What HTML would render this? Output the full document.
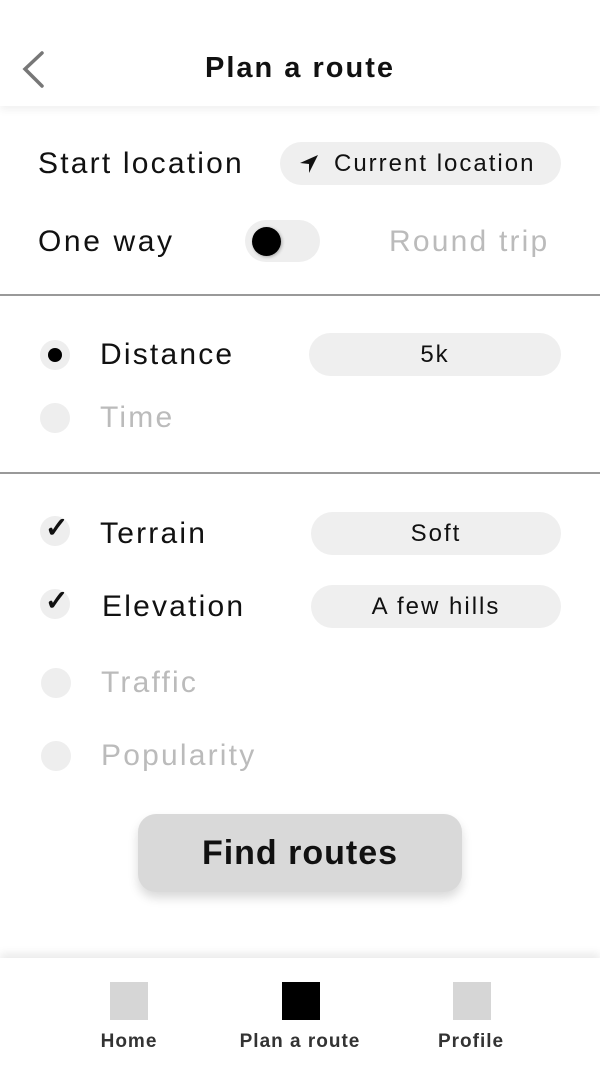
<!DOCTYPE html><html><head><style>
body{margin:0;width:600px;height:1067px;position:relative;background:#fff;font-family:"Liberation Sans",sans-serif;overflow:hidden;color:#111}
.a{position:absolute}
.t{position:absolute;font-size:30px;line-height:34px;white-space:nowrap;letter-spacing:2.2px}
.g{color:#bbb}
.pill{position:absolute;background:#efefef;border-radius:22px;font-size:24px;letter-spacing:2px;display:flex;align-items:center;justify-content:center;white-space:nowrap}
.c{position:absolute;width:30px;height:30px;border-radius:50%;background:#eee}
.hr{position:absolute;left:0;width:600px;height:2px;background:#999}
.nl{position:absolute;font-size:19px;font-weight:bold;color:#333;text-align:center;width:200px;top:1031px;letter-spacing:1px}
.sq{position:absolute;width:38px;height:38px;top:982px;background:#d6d6d6}
.ck{position:absolute;font-size:28px;font-weight:bold;line-height:30px}
</style></head><body>
<div class="a" style="left:0;top:0;width:600px;height:106px;background:#fff;box-shadow:0 4px 8px rgba(0,0,0,0.06)"></div>
<svg class="a" style="left:18px;top:50px" width="32" height="40"><path d="M24 3 L7 19 L24 36" fill="none" stroke="#777" stroke-width="3.5" stroke-linecap="round"/></svg>
<div class="t" style="left:0;width:600px;text-align:center;top:51px;font-weight:bold;font-size:29px;letter-spacing:2px">Plan a route</div>
<div class="t" style="left:38px;top:147px">Start location</div>
<div class="pill" style="left:280px;top:142px;width:281px;height:43px;justify-content:flex-start">
<svg style="margin-left:18px;margin-right:14px" width="22" height="22" viewBox="0 0 22 22"><path d="M20 2 L2 10 L11 11 L11 20 Z" fill="#111"/></svg>Current location</div>
<div class="t" style="left:38px;top:225px;letter-spacing:2.6px">One way</div>
<div class="a" style="left:245px;top:220px;width:75px;height:42px;border-radius:21px;background:#eee"></div>
<div class="a" style="left:252px;top:227px;width:29px;height:29px;border-radius:50%;background:#000;box-shadow:1px 1px 3px rgba(0,0,0,.3)"></div>
<div class="t g" style="left:389px;top:225px">Round trip</div>
<div class="hr" style="top:294px"></div>
<div class="c" style="left:40px;top:340px"></div><div class="a" style="left:48px;top:348px;width:14px;height:14px;border-radius:50%;background:#000"></div>
<div class="t" style="left:100px;top:338px">Distance</div>
<div class="pill" style="left:309px;top:333px;width:252px;height:43px">5k</div>
<div class="c" style="left:40px;top:403px"></div>
<div class="t g" style="left:100px;top:401px">Time</div>
<div class="hr" style="top:472px"></div>
<div class="c" style="left:40px;top:516px"></div><div class="ck" style="left:45px;top:513px">✓</div>
<div class="t" style="left:100px;top:517px">Terrain</div>
<div class="pill" style="left:311px;top:512px;width:250px;height:43px">Soft</div>
<div class="c" style="left:40px;top:589px"></div><div class="ck" style="left:45px;top:586px">✓</div>
<div class="t" style="left:102px;top:590px">Elevation</div>
<div class="pill" style="left:311px;top:585px;width:250px;height:43px">A few hills</div>
<div class="c" style="left:41px;top:668px"></div>
<div class="t g" style="left:101px;top:666px">Traffic</div>
<div class="c" style="left:41px;top:741px"></div>
<div class="t g" style="left:101px;top:739px">Popularity</div>
<div class="a" style="left:138px;top:814px;width:324px;height:78px;border-radius:18px;background:#d9d9d9;box-shadow:0 6px 10px rgba(0,0,0,.15);display:flex;align-items:center;justify-content:center;font-size:34px;font-weight:bold;letter-spacing:1px">Find routes</div>
<div class="a" style="left:0;top:958px;width:600px;height:109px;background:#fff;box-shadow:0 -5px 8px rgba(0,0,0,.08)"></div>
<div class="sq" style="left:110px"></div><div class="sq" style="left:282px;background:#000"></div><div class="sq" style="left:453px"></div>
<div class="nl" style="left:29px">Home</div><div class="nl" style="left:200px">Plan a route</div><div class="nl" style="left:371px">Profile</div>
</body></html>
